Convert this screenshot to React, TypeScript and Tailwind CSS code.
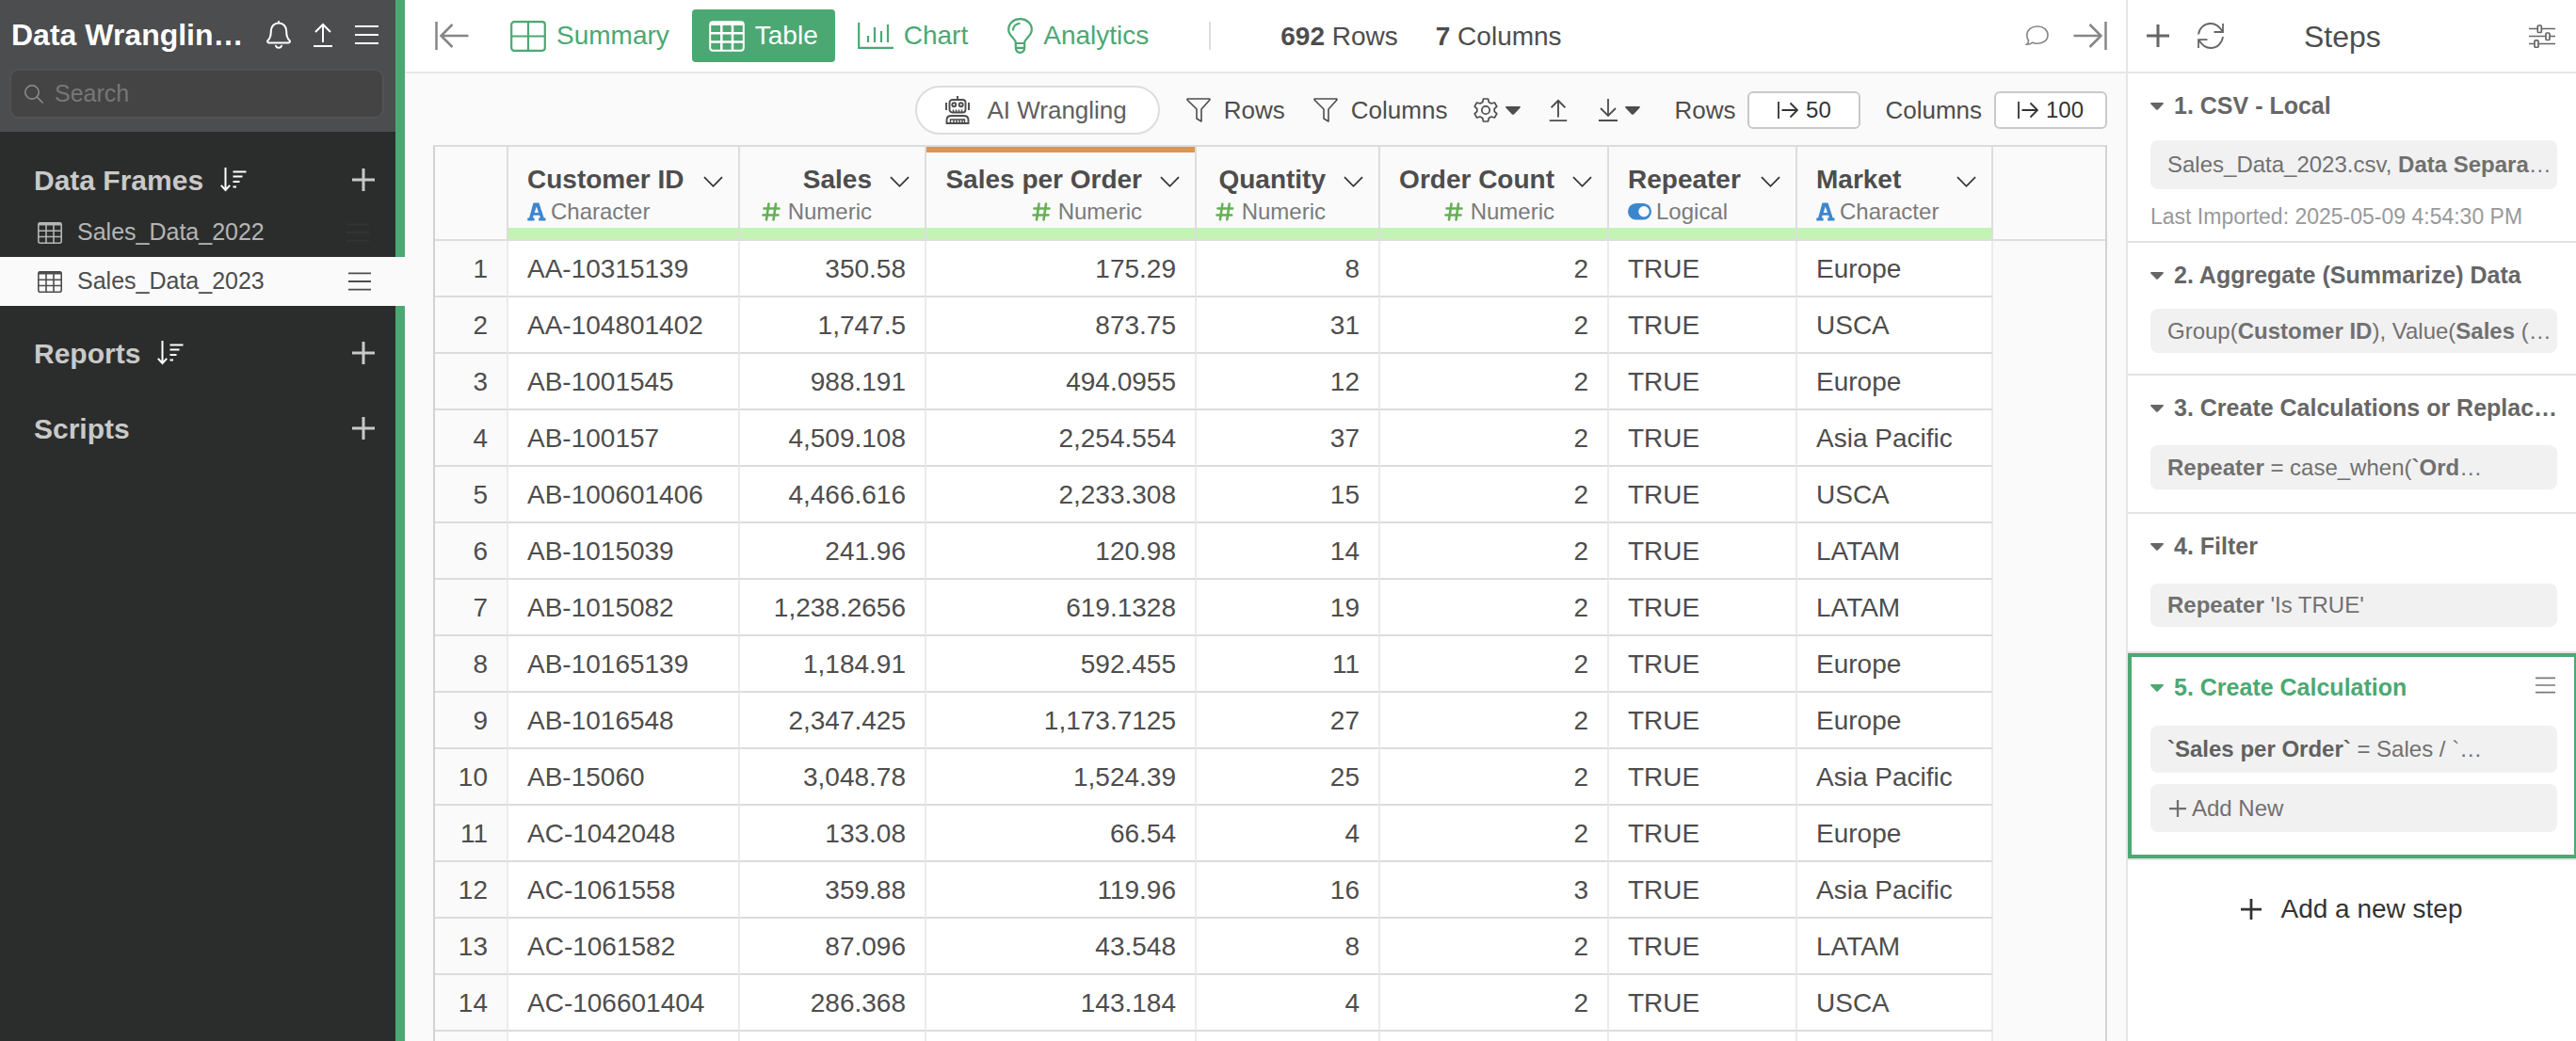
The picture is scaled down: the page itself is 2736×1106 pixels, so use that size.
import React, { useState } from 'react';

type ColumnType = 'Character' | 'Numeric' | 'Logical';

interface Column {
  name: string;
  type: ColumnType;
  width: string;
  highlighted?: boolean;
}

const columns: Column[] = [
  { name: 'Customer ID', type: 'Character', width: 'w-[246px]' },
  { name: 'Sales', type: 'Numeric', width: 'w-[198px]' },
  { name: 'Sales per Order', type: 'Numeric', width: 'w-[287px]', highlighted: true },
  { name: 'Quantity', type: 'Numeric', width: 'w-[195px]' },
  { name: 'Order Count', type: 'Numeric', width: 'w-[243px]' },
  { name: 'Repeater', type: 'Logical', width: 'w-[200px]' },
  { name: 'Market', type: 'Character', width: 'w-[208px]' },
];

const rows: string[][] = [
  ['AA-10315139', '350.58', '175.29', '8', '2', 'TRUE', 'Europe'],
  ['AA-104801402', '1,747.5', '873.75', '31', '2', 'TRUE', 'USCA'],
  ['AB-1001545', '988.191', '494.0955', '12', '2', 'TRUE', 'Europe'],
  ['AB-100157', '4,509.108', '2,254.554', '37', '2', 'TRUE', 'Asia Pacific'],
  ['AB-100601406', '4,466.616', '2,233.308', '15', '2', 'TRUE', 'USCA'],
  ['AB-1015039', '241.96', '120.98', '14', '2', 'TRUE', 'LATAM'],
  ['AB-1015082', '1,238.2656', '619.1328', '19', '2', 'TRUE', 'LATAM'],
  ['AB-10165139', '1,184.91', '592.455', '11', '2', 'TRUE', 'Europe'],
  ['AB-1016548', '2,347.425', '1,173.7125', '27', '2', 'TRUE', 'Europe'],
  ['AB-15060', '3,048.78', '1,524.39', '25', '2', 'TRUE', 'Asia Pacific'],
  ['AC-1042048', '133.08', '66.54', '4', '2', 'TRUE', 'Europe'],
  ['AC-1061558', '359.88', '119.96', '16', '3', 'TRUE', 'Asia Pacific'],
  ['AC-1061582', '87.096', '43.548', '8', '2', 'TRUE', 'LATAM'],
  ['AC-106601404', '286.368', '143.184', '4', '2', 'TRUE', 'USCA'],
];

interface IconProps {
  className?: string;
}

const MenuIcon: React.FC<IconProps> = ({ className }) => (
  <svg viewBox="0 0 25 20" fill="none" stroke="currentColor" strokeWidth="2" className={className}>
    <path d="M0 1h25M0 10h25M0 19h25" />
  </svg>
);

const PlusIcon: React.FC<IconProps> = ({ className }) => (
  <svg viewBox="0 0 24 24" fill="none" stroke="currentColor" strokeWidth="3" className={className}>
    <path d="M12 0v24M0 12h24" />
  </svg>
);

const BellIcon = () => (
  <svg viewBox="0 0 26 30" fill="none" stroke="currentColor" strokeWidth="2" strokeLinecap="round" strokeLinejoin="round" className="w-[26px] h-[30px]">
    <path d="M13 1v1.5M13 2.500c-5 0-8.200 3.800-8.200 8.500 0 6-1 8-3.300 10-.8.900-.5 2.400 1 2.400h21c1.500 0 1.800-1.500 1-2.400-2.300-2-3.300-4-3.300-10 0-4.700-3.200-8.500-8.200-8.500zM10 26.800c.6 1.500 1.600 2 3 2s2.400-.5 3-2" />
  </svg>
);

const UploadIcon: React.FC<IconProps> = ({ className }) => (
  <svg viewBox="0 0 20 26" fill="none" stroke="currentColor" strokeWidth="2" className={className}>
    <path d="M10 21V2M2 10l8-8 8 8M0 25h20" />
  </svg>
);

const DownloadIcon: React.FC<IconProps> = ({ className }) => (
  <svg viewBox="0 0 20 24" fill="none" stroke="currentColor" strokeWidth="1.800" className={className}>
    <path d="M10 0v18M2 10l8 8 8-8M0 23h20" />
  </svg>
);

const SearchIcon = () => (
  <svg viewBox="0 0 20 20" fill="none" stroke="currentColor" strokeWidth="1.5" className="w-5 h-5">
    <circle cx="8" cy="8" r="7.200" />
    <path d="M13.200 13l6.500 6.500" />
  </svg>
);

const SortIcon = () => (
  <svg viewBox="0 0 28 26" fill="none" stroke="currentColor" strokeWidth="2" className="w-7 h-[26px]">
    <path d="M5.500 0v24M.8 18.800l4.700 5.200 4.700-5.200M13.500 4.500h14M13.500 9.500h10M13.500 15h7M13.500 20.500h3.500" />
  </svg>
);

const GridIcon: React.FC<IconProps> = ({ className }) => (
  <svg viewBox="0 0 26 23" fill="none" stroke="currentColor" strokeWidth="1.6" className={className}>
    <rect x="0.800" y="0.800" width="24.400" height="21.400" rx="2" />
    <path d="M1 2h24" strokeWidth="3" />
    <path d="M1 9.300h24M1 15.500h24M9 2v20M17 2v20" />
  </svg>
);

const CollapseLeftIcon = () => (
  <svg viewBox="0 0 36 30" fill="none" stroke="currentColor" strokeWidth="2.500" className="w-9 h-[30px]">
    <path d="M1.500 0v30M35.500 15H6.500M18.500 3L6.500 15l12 12" />
  </svg>
);

const CollapseRightIcon = () => (
  <svg viewBox="0 0 36 30" fill="none" stroke="currentColor" strokeWidth="2.500" className="w-9 h-[30px]">
    <path d="M34.500 0v30M.5 15h29M17.500 3l12 12-12 12" />
  </svg>
);

const SummaryIcon = () => (
  <svg viewBox="0 0 38 33" fill="none" stroke="currentColor" strokeWidth="2.200" className="w-[38px] h-[33px]">
    <rect x="1.200" y="1.200" width="35.600" height="30.600" rx="3" />
    <path d="M1 16.500h36M19 1v31" />
  </svg>
);

const TableIcon = () => (
  <svg viewBox="0 0 38 33" fill="none" stroke="currentColor" strokeWidth="2" className="w-[38px] h-[33px]">
    <rect x="1.200" y="1.200" width="35.600" height="30.600" rx="3" />
    <path d="M1 3h36" strokeWidth="4" />
    <path d="M1 13.200h36M1 22.500h36M13.300 3v29M25 3v29" strokeWidth="2.500" />
  </svg>
);

const ChartIcon = () => (
  <svg viewBox="0 0 38 28" fill="none" stroke="currentColor" strokeWidth="2.200" className="w-[38px] h-7">
    <path d="M1.200 0v26.800H38" />
    <path d="M11 14v7M18 5v16M25 9v12M32 2v19" />
  </svg>
);

const BulbIcon = () => (
  <svg viewBox="0 0 27 38" fill="none" stroke="currentColor" strokeWidth="2.200" className="w-[27px] h-[38px]">
    <path d="M9 27c0-5-7.800-7.500-7.800-14.500C1.200 5.800 6.500 1.200 13.500 1.200s12.300 4.600 12.300 11.300C25.800 19.500 18 22 18 27z" />
    <path d="M6 13.500c0-4.500 3-7.500 7.500-7.700M8.800 27v4c0 4 1.500 5.800 4.700 5.800s4.700-1.800 4.700-5.800v-4M9 31.800h9" />
  </svg>
);

const ChatIcon = () => (
  <svg viewBox="0 0 25 22" fill="none" stroke="currentColor" strokeWidth="1.600" className="w-[25px] h-[22px]">
    <path d="M13 1c6.500 0 11 3.800 11 9.200s-4.500 9-11 9c-2 0-3.800-.3-5.300-1-1.500 1.400-3.600 2.100-6.200 2.100 1.300-1.200 2-2.500 2-4.300C2.300 14.500 1.800 12.500 1.800 10.200 1.800 4.800 6.500 1 13 1z" />
  </svg>
);

const RobotIcon = () => (
  <svg viewBox="0 0 26 30" fill="none" stroke="currentColor" strokeWidth="1.900" className="w-[26px] h-[30px]">
    <path d="M13 0v4M1 7v8M25 7v8" />
    <rect x="4.500" y="4" width="17" height="13.500" rx="3" />
    <circle cx="9.300" cy="9.300" r="2" />
    <circle cx="16.700" cy="9.300" r="2" />
    <path d="M8.500 17.500v-3M11.500 17.500v-3M14.500 17.500v-3M17.500 17.500v-3" strokeWidth="1.500" />
    <path d="M1.500 29h23v-3.500c0-2.800-2-4.500-5-4.500h-13c-3 0-5 1.700-5 4.500z" />
    <path d="M5.500 29v-4h15v4M9 29v-4M12 29v-4M15 29v-4M18 29v-4" strokeWidth="1.500" />
  </svg>
);

const FilterIcon = () => (
  <svg viewBox="0 0 26 26" fill="none" stroke="currentColor" strokeWidth="1.600" strokeLinejoin="round" className="w-[26px] h-[26px]">
    <path d="M1.500 1h23c.6 0 .8.700.3 1.200L16 12v13l-5-3v-10L1.200 2.200C.7 1.700.9 1 1.500 1z" />
  </svg>
);

const GearIcon = () => (
  <svg viewBox="0 0 26 26" fill="none" stroke="currentColor" strokeWidth="1.700" strokeLinejoin="round" className="w-[26px] h-[26px]">
    <circle cx="13" cy="13" r="4.200" />
    <path d="M10.500 1h5l.8 3.500 2.600 1.500 3.500-1 2.400 4.200-2.600 2.500v2.600l2.600 2.500-2.400 4.200-3.500-1-2.600 1.500-.8 3.500h-5l-.8-3.500-2.600-1.500-3.500 1-2.400-4.200 2.600-2.500v-2.600L1.200 9.200 3.600 5l3.500 1 2.600-1.500z" />
  </svg>
);

const CaretIcon: React.FC<IconProps> = ({ className }) => (
  <svg viewBox="0 0 16 9" fill="currentColor" className={className}>
    <path d="M1 0h14c.9 0 1.200.9.600 1.500L9 8.400c-.6.600-1.400.600-2 0L.4 1.500C-.2.900.1 0 1 0z" />
  </svg>
);

const LimitIcon = () => (
  <svg viewBox="0 0 22 18" fill="none" stroke="currentColor" strokeWidth="1.800" className="w-[22px] h-[18px]">
    <path d="M1 0v18M4.500 9H21M13.500 1.500L21 9l-7.500 7.500" />
  </svg>
);

const ChevronIcon = () => (
  <svg viewBox="0 0 22 12" fill="none" stroke="currentColor" strokeWidth="1.800" className="w-[21px] h-3">
    <path d="M1 1l10 10L21 1" />
  </svg>
);

const RefreshIcon = () => (
  <svg viewBox="0 0 28 28" fill="none" stroke="currentColor" strokeWidth="1.800" className="w-7 h-7">
    <path d="M1 12.500C1.800 6 7 1 13.800 1c5 0 9.200 2.500 12.700 8.500M27 1v9h-9.500M27 15c-.8 6.700-6 12-12.800 12-5 0-9.200-2.500-12.700-8.500M1 27v-8.800h9.500" />
  </svg>
);

const SlidersIcon = () => (
  <svg viewBox="0 0 28 25" fill="none" stroke="currentColor" strokeWidth="1.700" className="w-7 h-[25px]">
    <path d="M0 4.500h9M14 4.500h14M0 12.500h17.500M22.500 12.500H28M0 20.500h5.500M10.500 20.500H28" />
    <rect x="9.300" y="1" width="4" height="7.500" rx="1" />
    <rect x="18" y="9" width="4" height="7.500" rx="1" />
    <rect x="6" y="16.800" width="4" height="7.500" rx="1" />
  </svg>
);

const TypeIcon = ({ type }: { type: ColumnType }) => {
  if (type === 'Numeric') {
    return (
      <svg viewBox="0 0 20 20" fill="none" stroke="#64b055" strokeWidth="2.600" strokeLinecap="round" className="w-5 h-5">
        <path d="M7.500 1.500l-2.500 17M15 1.500l-2.500 17M2.500 6.500h16M1.500 13.500h16" />
      </svg>
    );
  }
  if (type === 'Logical') {
    return (
      <svg viewBox="0 0 25 18" className="w-[25px] h-[18px]">
        <rect width="25" height="17.500" rx="8.700" fill="#3c86cf" />
        <circle cx="17" cy="8.800" r="5.700" fill="#fafafa" />
      </svg>
    );
  }
  return (
    <svg viewBox="0 0 20 20" fill="#3c86cf" fillRule="evenodd" className="w-5 h-5">
      <path d="M6.500 0.500h6l5.200 16h1.800v3h-7.300v-3h1.700l-.8-2.800H6.700l-.8 2.800h1.700v3H.3v-3h1.800zM9.800 4.500L7.700 11h4.300z" />
    </svg>
  );
};

const Sidebar = () => {
  const [selected, setSelected] = useState('Sales_Data_2023');

  const sections = [
    { title: 'Data Frames', sortable: true, items: ['Sales_Data_2022', 'Sales_Data_2023'] },
    { title: 'Reports', sortable: true, items: [] },
    { title: 'Scripts', sortable: false, items: [] },
  ];

  return (
    <aside className="w-[430px] shrink-0 border-r-10 border-[#4ca873] bg-[#2b2d2c]">
      {/* Project header */}
      <div className="h-[140px] bg-[#4c4d4f] pl-[10px] pr-3 text-white">
        <div className="h-[73px] flex items-center pl-[2px] pr-[6px]">
          <h1 className="flex-1 text-[32px] font-bold whitespace-nowrap">Data Wranglin…</h1>
          <div className="flex items-center gap-6">
            <button aria-label="Notifications"><BellIcon /></button>
            <button aria-label="Publish"><UploadIcon className="w-5 h-[26px]" /></button>
            <button aria-label="Project menu"><MenuIcon className="w-[25px] h-5" /></button>
          </div>
        </div>
        <label className="flex items-center gap-3 h-[53px] px-[14px] rounded-[10px] border-2 border-[#525252] bg-[#444444] text-[#8f8f8f]">
          <SearchIcon />
          <input
            type="text"
            aria-label="Search"
            placeholder="Search"
            className="flex-1 min-w-0 bg-transparent text-[25px] outline-none placeholder:text-[#777777]"
          />
        </label>
      </div>

      {/* Sections */}
      <nav className="pt-[1px]">
        {sections.map((section) => (
          <div key={section.title} className="pt-5">
            <div className="h-[60px] flex items-center pl-9 pr-[22px] text-[#c9c9c9]">
              <h2 className="text-[30px] font-bold mr-[18px]">{section.title}</h2>
              {section.sortable && (
                <button aria-label={`Sort ${section.title}`} className="text-white"><SortIcon /></button>
              )}
              <button aria-label={`Add to ${section.title}`} className="ml-auto"><PlusIcon className="w-6 h-6" /></button>
            </div>
            {section.items.map((item) => (
              <div
                key={item}
                className={
                  item === selected
                    ? 'h-[52px] flex items-center justify-between pl-10 pr-[36px] -mr-[10px] bg-[#fafafa] text-[#4d4d4d]'
                    : 'h-[52px] flex items-center justify-between pl-10 pr-[28px] text-[#b5b5b5]'
                }
              >
                <button onClick={() => setSelected(item)} className="flex items-center gap-4 text-[25px]">
                  <GridIcon className="w-[26px] h-[23px]" />
                  {item}
                </button>
                <button aria-label={`${item} menu`}>
                  <MenuIcon className={item === selected ? 'w-6 h-5' : 'w-6 h-5 text-[#333534]'} />
                </button>
              </div>
            ))}
          </div>
        ))}
      </nav>
    </aside>
  );
};

const TopBar = () => {
  const [tab, setTab] = useState('Table');

  const tabs = [
    { name: 'Summary', icon: <SummaryIcon /> },
    { name: 'Table', icon: <TableIcon /> },
    { name: 'Chart', icon: <ChartIcon /> },
    { name: 'Analytics', icon: <BulbIcon /> },
  ];

  return (
    <header className="h-[78px] flex items-center pl-8 pr-5 bg-white border-b-2 border-[#e6e6e6]">
      <button aria-label="Collapse left panel" className="text-[#868686] mr-[26px]"><CollapseLeftIcon /></button>
      <div className="flex items-center gap-[6px]">
        {tabs.map((t) => (
          <button
            key={t.name}
            onClick={() => setTab(t.name)}
            className={
              t.name === tab
                ? 'h-14 flex items-center gap-[11px] px-[18px] rounded text-[28px] bg-[#4ca873] text-white'
                : 'h-14 flex items-center gap-[11px] px-[18px] rounded text-[28px] text-[#4ca873]'
            }
          >
            {t.icon}
            {t.name}
          </button>
        ))}
      </div>
      <div className="w-[2px] h-[30px] ml-[46px] mr-[74px] bg-[#dddddd]" />
      <div className="flex gap-10 pt-[2px] text-[28px] text-[#4d4d4d]">
        <span><b>692</b> Rows</span>
        <span><b>7</b> Columns</span>
      </div>
      <div className="ml-auto flex items-center gap-[26px] text-[#868686]">
        <button aria-label="Comments"><ChatIcon /></button>
        <button aria-label="Collapse right panel"><CollapseRightIcon /></button>
      </div>
    </header>
  );
};

const Toolbar = () => (
  <div className="h-[76px] flex items-center justify-end px-5 pt-[2px] text-[26px] text-[#4d4d4d]">
    <button className="h-[52px] flex items-center gap-[18px] pl-[30px] pr-[33px] mr-7 rounded-full border-2 border-[#dddddd] bg-white">
      <RobotIcon />
      <span className="text-[#606060]">AI Wrangling</span>
    </button>
    <button className="flex items-center gap-[14px] mr-[30px]"><FilterIcon />Rows</button>
    <button className="flex items-center gap-[14px] mr-[28px]"><FilterIcon />Columns</button>
    <button aria-label="Settings" className="flex items-center gap-2 mr-[30px]">
      <GearIcon />
      <CaretIcon className="w-4 h-[9px]" />
    </button>
    <button aria-label="Export" className="mr-[33px]"><UploadIcon className="w-5 h-6" /></button>
    <button aria-label="Download" className="flex items-center gap-2 mr-9">
      <DownloadIcon className="w-5 h-6" />
      <CaretIcon className="w-4 h-[9px]" />
    </button>
    <span className="mr-[13px]">Rows</span>
    <button className="w-[120px] h-10 flex items-center justify-center gap-2 mr-[26px] rounded-md border-2 border-[#c9c9c9] bg-white text-[24px] text-[#333333]">
      <LimitIcon />
      50
    </button>
    <span className="mr-[13px]">Columns</span>
    <button className="w-[120px] h-10 flex items-center justify-center gap-2 rounded-md border-2 border-[#c9c9c9] bg-white text-[24px] text-[#333333]">
      <LimitIcon />
      100
    </button>
  </div>
);

const HeaderCell = ({ column }: { column: Column }) => {
  const numeric = column.type === 'Numeric';
  return (
    <th className="p-0 border-r-2 border-b-2 border-[#dddddd] font-normal">
      <div className="h-[98px] flex flex-col">
        <div className={column.highlighted ? 'h-[6px] shrink-0 bg-[#e3934c]' : 'h-[6px] shrink-0'} />
        <div className="h-20 shrink-0 pl-5 pr-4 pt-[13px]">
          <div className="flex items-center gap-[19px] h-8">
            <span className={numeric ? 'flex-1 text-right text-[28px] font-bold whitespace-nowrap' : 'flex-1 text-left text-[28px] font-bold whitespace-nowrap'}>
              {column.name}
            </span>
            <button aria-label={`${column.name} menu`} className="pt-1 text-[#333333]"><ChevronIcon /></button>
          </div>
          <div className={numeric ? 'flex items-center justify-end gap-2 h-[35px] pr-10 text-[24px] text-[#7a7a7a]' : 'flex items-center gap-[5px] h-[35px] text-[24px] text-[#7a7a7a]'}>
            <TypeIcon type={column.type} />
            {column.type}
          </div>
        </div>
        <div className="h-3 bg-[#c3f4b4]" />
      </div>
    </th>
  );
};

const DataTable = () => (
  <div className="flex-1 min-h-0 mr-5 ml-[30px] overflow-hidden border-l-2 border-r-2 border-t-2 border-[#d2d2d2] border-t-[#dcdcdc]">
    <table className="w-full table-fixed border-separate border-spacing-0 text-[28px] leading-8 text-[#4d4d4d]">
      <colgroup>
        <col className="w-[78px]" />
        {columns.map((c) => <col key={c.name} className={c.width} />)}
        <col />
      </colgroup>
      <thead>
        <tr>
          <th className="border-r-2 border-b-2 border-[#dddddd]" aria-label="Row number" />
          {columns.map((c) => <HeaderCell key={c.name} column={c} />)}
          <th className="border-b-2 border-[#dddddd]" aria-hidden="true" />
        </tr>
      </thead>
      <tbody>
        {rows.map((row, i) => (
          <tr key={row[0]} className="h-[60px]">
            <th scope="row" className="pt-[2px] pb-0 pl-0 pr-5 border-r-2 border-b-2 border-r-[#ebebeb] border-b-[#dcdcdc] text-right font-normal">
              {i + 1}
            </th>
            {row.map((value, j) => (
              <td
                key={columns[j].name}
                className={
                  columns[j].type === 'Numeric'
                    ? 'pt-[2px] pb-0 px-5 bg-white border-r-2 border-b-2 border-r-[#ebebeb] border-b-[#dcdcdc] text-right'
                    : 'pt-[2px] pb-0 px-5 bg-white border-r-2 border-b-2 border-r-[#ebebeb] border-b-[#dcdcdc] text-left'
                }
              >
                {value}
              </td>
            ))}
            <td />
          </tr>
        ))}
        {/* Next row, cut off by the bottom edge */}
        <tr className="h-[60px]">
          <td className="border-r-2 border-[#ebebeb]" />
          {columns.map((c) => <td key={c.name} className="bg-white border-r-2 border-[#ebebeb]" />)}
          <td />
        </tr>
      </tbody>
    </table>
  </div>
);

interface StepProps {
  title: string;
  className: string;
  children: React.ReactNode;
}

const Step: React.FC<StepProps> = ({ title, className, children }) => (
  <section className="border-b-2 border-[#e3e3e3]">
    <div className={className}>
      <button className="h-[70px] flex items-center gap-[11px] text-[25px] font-bold text-[#666666] whitespace-nowrap">
        <CaretIcon className="w-[14px] h-2" />
        {title}
      </button>
      {children}
    </div>
  </section>
);

const StepsPanel = () => (
  <aside className="w-[478px] shrink-0 border-l-2 border-[#e6e6e6] bg-white overflow-hidden">
    <header className="h-[78px] flex items-center pl-5 pr-[22px] border-b-2 border-[#e6e6e6] text-[#666666]">
      <button aria-label="Add step" className="mr-[30px]"><PlusIcon className="w-6 h-6" /></button>
      <button aria-label="Refresh" className="mr-[85px]"><RefreshIcon /></button>
      <h2 className="flex-1 pt-[2px] text-[32px] text-[#4d4d4d]">Steps</h2>
      <button aria-label="Step settings"><SlidersIcon /></button>
    </header>

    <Step title="1. CSV - Local" className="pl-6 pr-5">
      <button className="w-full h-[52px] mt-[1px] px-[18px] rounded-lg bg-[#f1f1f1] text-left text-[24px] text-[#707070] whitespace-nowrap overflow-hidden">
        Sales_Data_2023.csv, <b>Data Separa</b>…
      </button>
      <p className="h-[55px] pt-3 text-[23px] text-[#999999] whitespace-nowrap">Last Imported: 2025-05-09 4:54:30 PM</p>
    </Step>
    <Step title="2. Aggregate (Summarize) Data" className="pl-6 pr-5 pb-[22px]">
      <button className="w-full h-[47px] px-[18px] rounded-lg bg-[#f1f1f1] text-left text-[24px] text-[#707070] whitespace-nowrap overflow-hidden">
        Group(<b>Customer ID</b>), Value(<b>Sales</b> (…
      </button>
    </Step>
    <Step title="3. Create Calculations or Replac…" className="pl-6 pr-5 pb-6">
      <button className="w-full h-[47px] mt-1 px-[18px] rounded-lg bg-[#f1f1f1] text-left text-[24px] text-[#707070] whitespace-nowrap">
        <b>Repeater</b> = case_when(<b>`Ord</b>…
      </button>
    </Step>
    <Step title="4. Filter" className="pl-6 pr-5 pb-[26px]">
      <button className="w-full h-[46px] mt-1 px-[18px] rounded-lg bg-[#f1f1f1] text-left text-[24px] text-[#707070] whitespace-nowrap">
        <b>Repeater</b> 'Is TRUE'
      </button>
    </Step>

    {/* Active step */}
    <section className="border-b-2 border-[#e3e3e3]">
      <div className="border-4 border-r-2 border-[#4ca873] pl-5 pr-[18px] pb-6">
        <div className="h-[66px] flex items-center justify-between">
          <button className="flex items-center gap-[11px] text-[25px] font-bold text-[#4ca873] whitespace-nowrap">
            <CaretIcon className="w-[14px] h-2" />
            5. Create Calculation
          </button>
          <button aria-label="Step menu" className="text-[#7a7a7a] mr-[2px] pb-[6px]"><MenuIcon className="w-[21px] h-[18px]" /></button>
        </div>
        <div className="flex flex-col gap-3 pt-[7px]">
          <button className="h-[50px] px-[18px] rounded-lg bg-[#f1f1f1] text-left text-[24px] text-[#707070] whitespace-nowrap">
            <b className="text-[#606060]">`Sales per Order`</b> = Sales / `…
          </button>
          <button className="h-[51px] flex items-center gap-[6px] px-5 rounded-lg bg-[#f1f1f1] text-[24px] text-[#707070]">
            <PlusIcon className="w-[18px] h-[18px]" />
            Add New
          </button>
        </div>
      </div>
    </section>

    <button className="w-full h-[104px] flex items-center justify-center gap-5 text-[28px] text-[#333333]">
      <PlusIcon className="w-[22px] h-[22px]" />
      Add a new step
    </button>
  </aside>
);

export default function App() {
  return (
    <div className="h-screen flex overflow-hidden bg-[#fafafa] font-['Liberation_Sans',Arial,sans-serif]">
      <Sidebar />
      <main className="flex-1 min-w-0 flex flex-col">
        <TopBar />
        <Toolbar />
        <DataTable />
      </main>
      <StepsPanel />
    </div>
  );
}
